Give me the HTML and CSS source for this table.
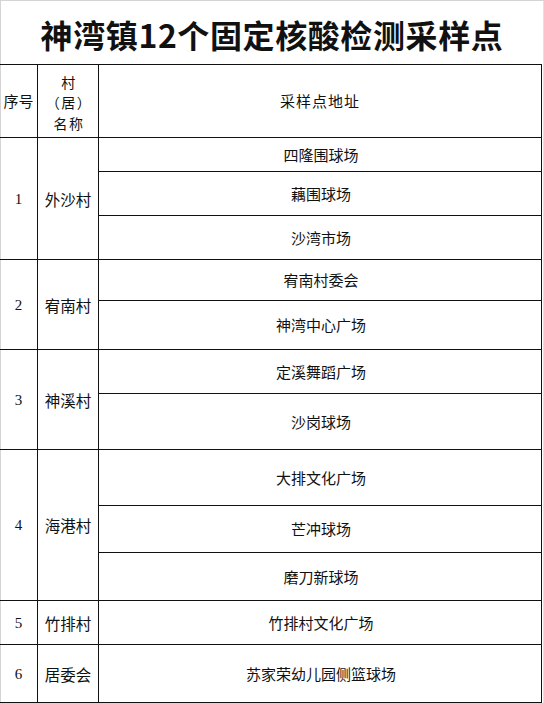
FILE: index.html
```html
<!DOCTYPE html>
<html lang="zh-CN">
<head>
<meta charset="utf-8">
<title>神湾镇12个固定核酸检测采样点</title>
<link rel="stylesheet" href="styles.css">
</head>
<body>
<div class="page">
  <h1 class="title">神湾镇12个固定核酸检测采样点</h1>
  <div class="table">
    <div class="cell head">序号</div>
    <div class="cell head name">村<br>（居）<br>名称</div>
    <div class="cell head addr">采样点地址</div>

    <div class="cell num span3">1</div>
    <div class="cell vil span3">外沙村</div>
    <div class="cell addr">四隆围球场</div>
    <div class="cell addr">藕围球场</div>
    <div class="cell addr">沙湾市场</div>

    <div class="cell num span2">2</div>
    <div class="cell vil span2">宥南村</div>
    <div class="cell addr">宥南村委会</div>
    <div class="cell addr">神湾中心广场</div>

    <div class="cell num span2">3</div>
    <div class="cell vil span2">神溪村</div>
    <div class="cell addr">定溪舞蹈广场</div>
    <div class="cell addr">沙岗球场</div>

    <div class="cell num span3">4</div>
    <div class="cell vil span3">海港村</div>
    <div class="cell addr">大排文化广场</div>
    <div class="cell addr">芒冲球场</div>
    <div class="cell addr">磨刀新球场</div>

    <div class="cell num">5</div>
    <div class="cell vil">竹排村</div>
    <div class="cell addr">竹排村文化广场</div>

    <div class="cell num">6</div>
    <div class="cell vil">居委会</div>
    <div class="cell addr">苏家荣幼儿园侧篮球场</div>
  </div>
</div>
</body>
</html>
```

FILE: styles.css
```css
html, body {
  margin: 0;
  padding: 0;
  background: #ffffff;
}

.page {
  width: 544px;
  height: 703px;
  box-sizing: border-box;
  box-shadow: inset 1px 1px 0 #d4d4d4, inset -1px 0 0 #e2e2e2;
  color: #111;
  font-family: "Noto Sans CJK SC", "Noto Sans", sans-serif;
  overflow: hidden;
}

.title {
  margin: 0;
  height: 64px;
  display: flex;
  align-items: center;
  justify-content: center;
  padding-top: 3px;
  box-sizing: border-box;
  font-size: 32px;
  font-weight: 700;
  letter-spacing: 0.6px;
  line-height: 1;
  color: #111;
}

.table {
  width: 542px;
  display: grid;
  grid-template-columns: 38px 61px 443px;
  grid-template-rows: 73px 34px 44px 44px 41px 49px 44px 56px 56px 47px 48px 44px 58px;
  border-top: 1px solid #111;
}

.cell {
  box-sizing: border-box;
  border-right: 1px solid #111;
  border-bottom: 1px solid #111;
  display: flex;
  align-items: center;
  justify-content: center;
  text-align: center;
  font-size: 15px;
  line-height: 18px;
  font-weight: 400;
}

.head {
  font-size: 15px;
}

.head.name {
  font-size: 14px;
  line-height: 20.5px;
  letter-spacing: 1.5px;
  padding-left: 2px;
  padding-top: 3px;
}

.head.addr {
  letter-spacing: 1px;
  padding-right: 2px;
}

.num {
  font-family: "Liberation Serif", serif;
  font-size: 15px;
}

.vil {
  font-size: 15.5px;
}

.addr {
  font-size: 15px;
  padding-left: 2px;
}

.span2 {
  grid-row: span 2;
}

.span3 {
  grid-row: span 3;
}
```
